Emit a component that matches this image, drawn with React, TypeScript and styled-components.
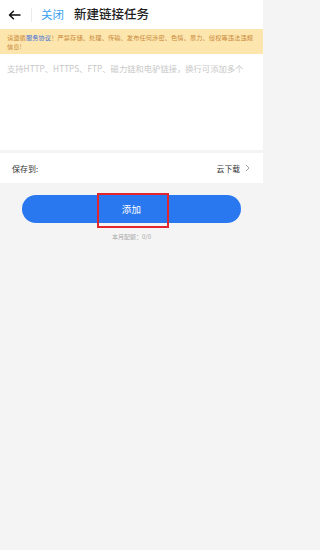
import styled, { createGlobalStyle } from 'styled-components';

const COLORS = {
  white: '#ffffff',
  page: '#f4f4f4',
  text: '#222222',
  label: '#333333',
  blue: '#2a78f0',
  link: '#3a9ff0',
  notice: '#fde6ad',
  noticeText: '#c9893c',
  agreement: '#3d6fd8',
  placeholder: '#c8c8c8',
  muted: '#a8a8a8',
  red: '#e2262d',
};

const GlobalStyle = createGlobalStyle`
  body {
    margin: 0;
    background: ${COLORS.page};
    font-family: 'Noto Sans CJK SC', 'Noto Sans', sans-serif;
  }
  * {
    box-sizing: border-box;
  }
`;

function App() {
  return (
    <Page>
      <GlobalStyle />
      <Header>
        <BackButton aria-label="返回">
          <svg width="13" height="10" viewBox="0 0 13 10" fill="none">
            <path
              d="M12 5H1.6M5.4 1.2L1.5 5l3.9 3.8"
              stroke="#111"
              strokeWidth="1.5"
              strokeLinecap="round"
              strokeLinejoin="round"
            />
          </svg>
        </BackButton>
        <Divider />
        <CloseLink>关闭</CloseLink>
        <Title>新建链接任务</Title>
      </Header>

      <Notice>
        <NoticeLine>
          请遵循<Agreement>服务协议</Agreement>！严禁存储、处理、传输、发布任何涉密、色情、暴力、侵权等违法违规
        </NoticeLine>
        <NoticeLine>信息!</NoticeLine>
      </Notice>

      <LinkInput placeholder="支持HTTP、HTTPS、FTP、磁力链和电驴链接，换行可添加多个" />

      <SaveRow>
        <SaveLabel>保存到:</SaveLabel>
        <SaveTarget>
          云下载
          <svg width="5" height="8" viewBox="0 0 5 8" fill="none">
            <path d="M1 1l3 3-3 3" stroke="#999" strokeWidth="0.9" />
          </svg>
        </SaveTarget>
      </SaveRow>

      <Actions>
        <AddButton>
          添加
          <Highlight />
        </AddButton>
        <Quota>本月配额：0/0</Quota>
      </Actions>
    </Page>
  );
}

const Page = styled.div`
  width: 263px;
  min-height: 100vh;
  display: flex;
  flex-direction: column;
  background: ${COLORS.page};
`;

const Header = styled.header`
  height: 29px;
  display: flex;
  align-items: center;
  padding-left: 8px;
  background: ${COLORS.white};
`;

const BackButton = styled.button`
  display: flex;
  align-items: center;
  padding: 0;
  border: none;
  background: none;
  width: 13px;
`;

const Divider = styled.span`
  width: 1px;
  height: 14px;
  margin: 0 9px 0 10px;
  background: #ececec;
`;

const CloseLink = styled.span`
  font-size: 11.5px;
  color: ${COLORS.link};
  margin-right: 10px;
  line-height: 1;
`;

const Title = styled.h1`
  margin: 0;
  font-size: 12.5px;
  font-weight: 500;
  color: ${COLORS.text};
  line-height: 1;
`;

const Notice = styled.div`
  height: 25px;
  padding: 3.5px 4px 0 7px;
  background: ${COLORS.notice};
  color: ${COLORS.noticeText};
  font-size: 6.2px;
  line-height: 9px;
  letter-spacing: 0.12px;
`;

const NoticeLine = styled.div`
  white-space: nowrap;
`;

const Agreement = styled.span`
  color: ${COLORS.agreement};
`;

const LinkInput = styled.textarea`
  display: block;
  width: 100%;
  height: 96px;
  margin: 0 0 3px;
  padding: 8px 7px;
  border: none;
  outline: none;
  resize: none;
  background: ${COLORS.white};
  font-family: inherit;
  font-size: 8.3px;
  line-height: 12px;
  &::placeholder {
    color: ${COLORS.placeholder};
  }
`;

const SaveRow = styled.div`
  height: 30px;
  display: flex;
  align-items: center;
  justify-content: space-between;
  padding: 0 13px 0 12px;
  background: ${COLORS.white};
`;

const SaveLabel = styled.span`
  font-size: 8px;
  color: ${COLORS.label};
`;

const SaveTarget = styled.span`
  display: flex;
  align-items: center;
  gap: 5px;
  font-size: 7.8px;
  color: ${COLORS.label};
`;

const Actions = styled.div`
  display: flex;
  flex-direction: column;
  align-items: center;
  padding: 12px 22px 0;
`;

const AddButton = styled.button`
  position: relative;
  width: 100%;
  height: 28px;
  border: none;
  border-radius: 14px;
  background: ${COLORS.blue};
  color: ${COLORS.white};
  font-family: inherit;
  font-size: 9.5px;
  letter-spacing: 0.3px;
`;

const Highlight = styled.span`
  position: absolute;
  left: 75px;
  top: -2px;
  width: 72px;
  height: 35px;
  border: 2px solid ${COLORS.red};
  pointer-events: none;
`;

const Quota = styled.span`
  margin-top: 9px;
  font-size: 6px;
  color: ${COLORS.muted};
`;

export default App;
